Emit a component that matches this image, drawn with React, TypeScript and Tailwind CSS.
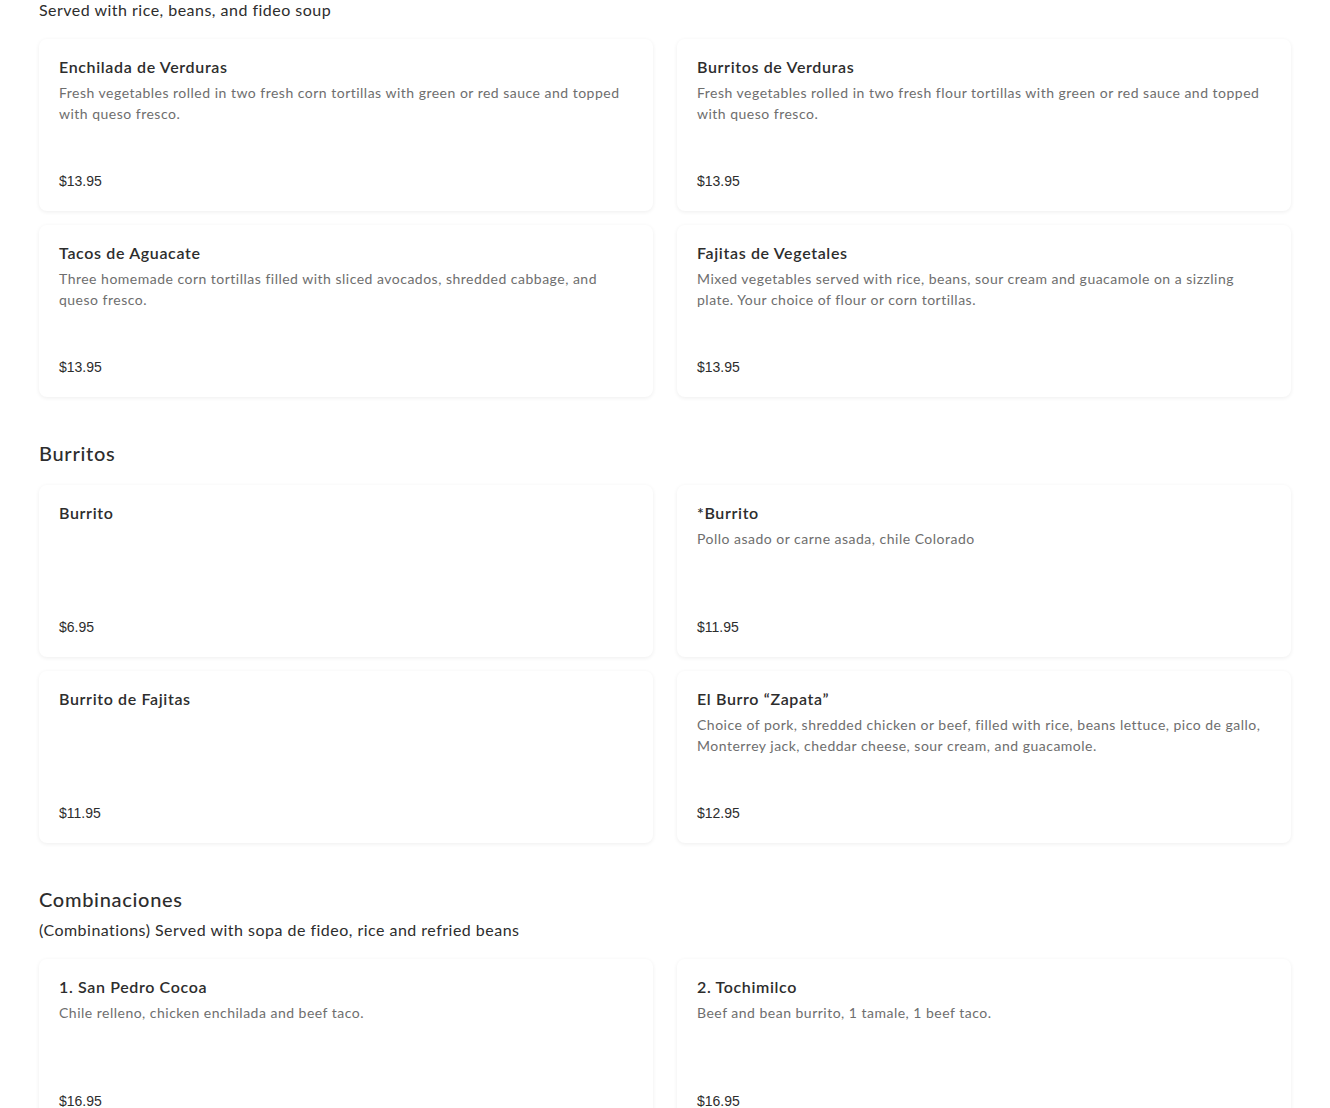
const sections = [
  {
    items: [
      {
        name: "Enchilada de Verduras",
        desc: "Fresh vegetables rolled in two fresh corn tortillas with green or red sauce and topped with queso fresco.",
        price: "$13.95",
      },
      {
        name: "Burritos de Verduras",
        desc: "Fresh vegetables rolled in two fresh flour tortillas with green or red sauce and topped with queso fresco.",
        price: "$13.95",
      },
      {
        name: "Tacos de Aguacate",
        desc: "Three homemade corn tortillas filled with sliced avocados, shredded cabbage, and queso fresco.",
        price: "$13.95",
      },
      {
        name: "Fajitas de Vegetales",
        desc: "Mixed vegetables served with rice, beans, sour cream and guacamole on a sizzling plate. Your choice of flour or corn tortillas.",
        price: "$13.95",
      },
    ],
  },
  {
    title: "Burritos",
    items: [
      { name: "Burrito", desc: "", price: "$6.95" },
      { name: "*Burrito", desc: "Pollo asado or carne asada, chile Colorado", price: "$11.95" },
      { name: "Burrito de Fajitas", desc: "", price: "$11.95" },
      {
        name: "El Burro \u201cZapata\u201d",
        desc: "Choice of pork, shredded chicken or beef, filled with rice, beans lettuce, pico de gallo, Monterrey jack, cheddar cheese, sour cream, and guacamole.",
        price: "$12.95",
      },
    ],
  },
  {
    title: "Combinaciones",
    subtitle: "(Combinations) Served with sopa de fideo, rice and refried beans",
    items: [
      { name: "1. San Pedro Cocoa", desc: "Chile relleno, chicken enchilada and beef taco.", price: "$16.95" },
      { name: "2. Tochimilco", desc: "Beef and bean burrito, 1 tamale, 1 beef taco.", price: "$16.95" },
    ],
  },
];

function MenuCard({ name, desc, price }: { name: string; desc: string; price: string }) {
  return (
    <div className="flex h-[172px] flex-col rounded-lg bg-white px-5 pt-4 pb-5 shadow-[0_1px_4px_rgba(0,0,0,0.07)]">
      <h3 className="text-[16px] leading-6 font-semibold tracking-[0.04em] text-[#2d2d2d]">{name}</h3>
      {desc && <p className="mt-[3px] text-[14px] leading-[21px] tracking-[0.035em] text-[#6e6e6e]">{desc}</p>}
      <div className="mt-auto font-['Liberation_Sans',Arial,sans-serif] text-[14px] leading-5 tracking-normal text-[#2d2d2d]">
        {price}
      </div>
    </div>
  );
}

export default function App() {
  return (
    <div className="min-h-screen bg-white px-[39px] pb-10 font-['Lato','Noto_Sans',sans-serif]">
      <p className="mt-[-2px] text-[16px] leading-6 tracking-[0.03em] text-[#2d2d2d]">Served with rice, beans, and fideo soup</p>
      {sections.map((s, i) => (
        <section key={i} className={i === 0 ? "mt-[17px]" : "mt-[42px]"}>
          {s.title && <h2 className="text-[20px] leading-7 font-medium tracking-[0.035em] text-[#2d2d2d]">{s.title}</h2>}
          {s.subtitle && <p className="mt-[5px] text-[16px] leading-6 tracking-[0.03em] text-[#2d2d2d]">{s.subtitle}</p>}
          <div className={`grid grid-cols-2 gap-x-6 gap-y-[14px] ${s.title ? (s.subtitle ? "mt-[17px]" : "mt-[18px]") : ""}`}>
            {s.items.map((it) => (
              <MenuCard key={it.name} {...it} />
            ))}
          </div>
        </section>
      ))}
    </div>
  );
}
